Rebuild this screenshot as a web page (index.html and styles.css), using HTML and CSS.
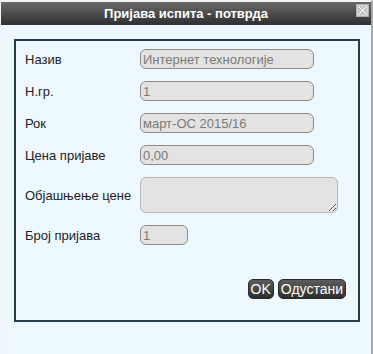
FILE: index.html
```html
<!DOCTYPE html>
<html lang="sr">
<head>
  <meta charset="UTF-8">
  <title>Пријава испита - потврда</title>
  <link rel="stylesheet" href="styles.css">
</head>
<body>

  <div class="dialog">
    <div class="titlebar">
      <span class="title">Пријава испита - потврда</span>
      <span class="close">
        <svg width="13" height="13" viewBox="0 0 13 13">
          <rect x="0.5" y="0.5" width="12" height="12" fill="#d4d4d4" stroke="#b0b0b0"/>
          <path d="M3 3 L10 10 M10 3 L3 10" stroke="#9a9a9a" stroke-width="3"/>
          <path d="M3 3 L10 10 M10 3 L3 10" stroke="#fff" stroke-width="1.4"/>
        </svg>
      </span>
    </div>

    <div class="content">
      <div class="panel">
        <form class="fields">
          <label for="naziv">Назив</label>
          <input type="text" id="naziv" class="wide" value="Интернет технологије" disabled>

          <label for="ngr">Н.гр.</label>
          <input type="text" id="ngr" class="wide" value="1" disabled>

          <label for="rok">Рок</label>
          <input type="text" id="rok" class="wide" value="март-ОС 2015/16" disabled>

          <label for="cena">Цена пријаве</label>
          <input type="text" id="cena" class="wide" value="0,00" disabled>

          <label for="objasnjenje">Објашњење цене</label>
          <textarea id="objasnjenje" disabled></textarea>

          <label for="broj">Број пријава</label>
          <input type="text" id="broj" class="short" value="1" disabled>
        </form>

        <div class="buttons">
          <button type="button">OK</button>
          <button type="button">Одустани</button>
        </div>
      </div>
    </div>
  </div>

</body>
</html>
```

FILE: styles.css
```css
body {
  font-family: 'Liberation Sans', Arial, sans-serif;
  margin: 0;
  padding: 0;
  background: #eef8ff;
}

.dialog {
  width: 370px;
  height: 353px;
  border-top: 1px solid #f4f4f4;
  border-left: 1px solid #f4f4f4;
  border-right: 2px solid #a8a8a8;
  background: #eef8ff;
  display: flex;
  flex-direction: column;
}

.titlebar {
  height: 23px;
  margin-top: 1px;
  background: linear-gradient(#6a6a6a, #2f2f2f);
  display: flex;
  align-items: center;
  justify-content: center;
  position: relative;
}

.title {
  color: white;
  font-weight: bold;
  font-size: 13px;
}

.close {
  position: absolute;
  right: 2px;
  top: 2px;
  line-height: 0;
}

.content {
  padding: 14px 0 0 13px;
}

.panel {
  border: 2px solid #2a3b4d;
  padding: 8px 12px 0 9px;
  box-sizing: border-box;
  width: 346px;
  height: 283px;
}

.fields {
  display: grid;
  grid-template-columns: 115px auto;
  row-gap: 12px;
  align-items: center;
  justify-items: start;
}

label {
  font-size: 13px;
  color: #222;
}

input[type="text"],
textarea {
  font-family: 'Liberation Sans', Arial, sans-serif;
  font-size: 13px;
  color: #7a7a7a;
  background: #e3e3e3;
  border: 1px solid #8c8c8c;
  border-radius: 6px;
  padding: 0 2px;
  margin: 0;
  box-sizing: border-box;
  height: 20px;
}

.wide {
  width: 174px;
}

.short {
  width: 48px;
}

textarea {
  width: 198px;
  height: 36px;
  border-color: #b8b8b8;
  resize: vertical;
}

.buttons {
  display: flex;
  justify-content: flex-end;
  gap: 4px;
  margin-top: 34px;
}

button {
  font-family: 'Liberation Sans', Arial, sans-serif;
  font-size: 14px;
  color: white;
  background: linear-gradient(#5c5c5c, #2e2e2e);
  border: 1px solid #2a2a2a;
  border-radius: 5px;
  padding: 0 2px;
  height: 20px;
  line-height: 18px;
  cursor: pointer;
}
```
